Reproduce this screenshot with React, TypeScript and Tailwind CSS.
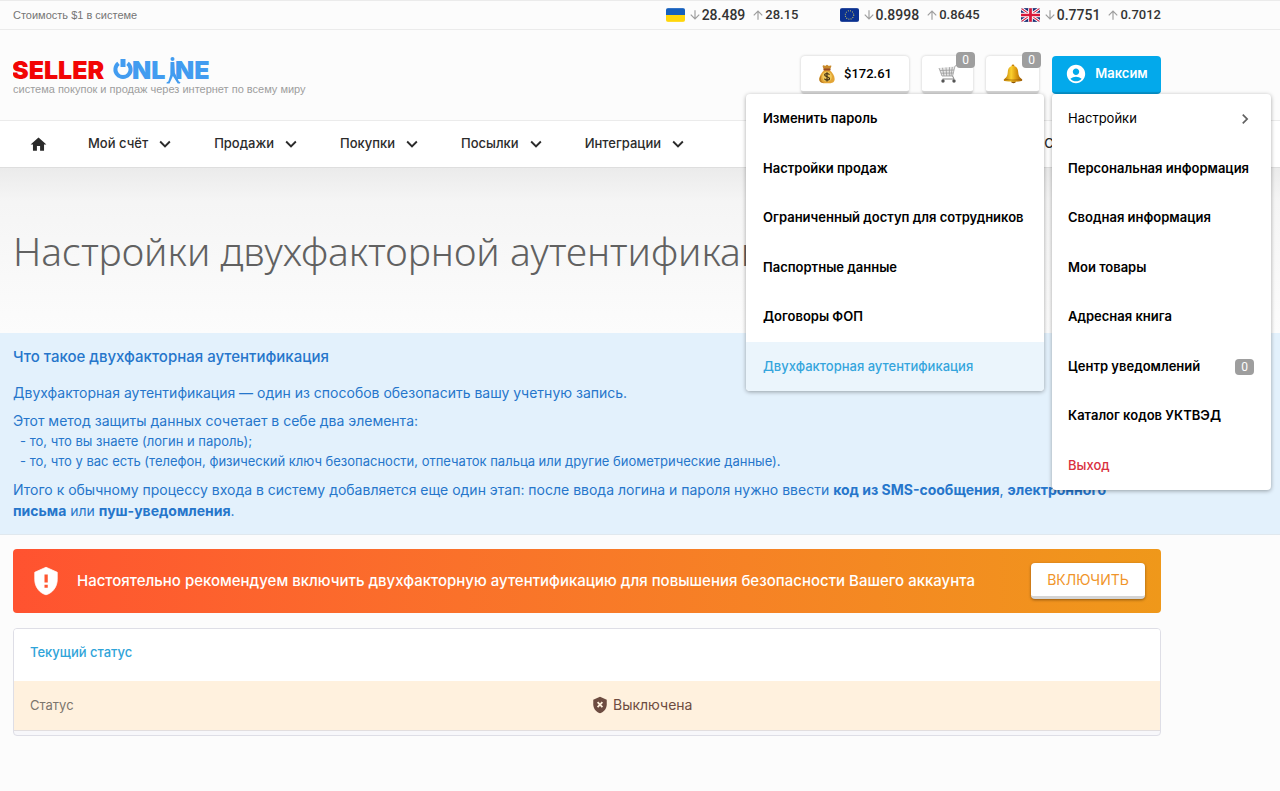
import React from "react";
import {
	MdAccountCircle,
	MdArrowDownward,
	MdArrowUpward,
	MdChevronRight,
	MdHome,
	MdKeyboardArrowDown,
} from "react-icons/md";

type Rate = { name: string; flag: React.ReactNode; down: string; up: string };

const UaFlag = () => (
	<svg viewBox="0 0 18 13" className="w-[19px] h-[14px] rounded-[2px]" aria-hidden="true">
		<rect width="18" height="7" fill="#1560bd" />
		<rect y="6.5" width="18" height="6.5" fill="#ffd60a" />
	</svg>
);

const EuFlag = () => (
	<svg viewBox="0 0 18 13" className="w-[19px] h-[14px] rounded-[2px]" aria-hidden="true">
		<rect width="18" height="13" fill="#0b3190" />
		<circle cx="9" cy="6.5" r="4" fill="none" stroke="#c9c35a" strokeWidth="1" strokeDasharray="0.9 1.2" />
	</svg>
);

const GbFlag = () => (
	<svg viewBox="0 0 18 13" className="w-[19px] h-[14px] rounded-[2px]" aria-hidden="true">
		<rect width="18" height="13" fill="#1b2f74" />
		<path d="M0 0l18 13M18 0L0 13" stroke="#fff" strokeWidth="2.8" />
		<path d="M0 0l18 13M18 0L0 13" stroke="#d8173a" strokeWidth="1" />
		<path d="M9 0v13M0 6.5h18" stroke="#fff" strokeWidth="4.4" />
		<path d="M9 0v13M0 6.5h18" stroke="#d8173a" strokeWidth="2.6" />
	</svg>
);

const MoneyBag = () => (
	<svg viewBox="0 0 20 22" className="w-[18px] h-5" aria-hidden="true">
		<path d="M6.5 6C5.5 3.500 4.600 2 5.500 1.500c1-.5 1.600.6 2.600.4C9 1.700 9.200.6 10 .6s1.100 1.100 2 1.300c1 .2 1.700-.9 2.600-.3.800.6-.2 2-1.200 4.400z" fill="#c98a2b" />
		<path d="M7 6.500C4 9 1.500 13 1.500 16.500c0 3.500 2 4.900 8.500 4.900s8.500-1.400 8.500-4.900C18.500 13 16 9 13 6.500z" fill="#e3a536" />
		<path d="M4 12.500c-1.500 4-.8 7.500 3 8.500-4.500-.3-5.500-2-5.500-4.500 0-1.400 1-3 2.500-4z" fill="#b87a20" />
		<rect x="6" y="5" width="8" height="2" rx="1" fill="#9b4a22" />
		<circle cx="10" cy="14" r="5.400" fill="#f0c95c" />
		<path d="M12.700 11.800c-.4-1-1.500-1.400-2.700-1.400-1.500 0-2.600.7-2.600 1.800 0 2.500 5.400 1.200 5.400 3.700 0 1.100-1.200 1.800-2.800 1.800-1.400 0-2.500-.6-2.800-1.600M10 9v10.200" fill="none" stroke="#3f2d10" strokeWidth="1.300" />
	</svg>
);

const Cart = () => (
	<svg viewBox="0 0 20 20" className="w-5 h-5" fill="none" aria-hidden="true">
		<path d="M1 4l15.500-1.500L14.600 12H4z" fill="#e6e6e6" />
		<path d="M1 4l3 8h10.600L17 2l2-.8M2 6.500l14-.5M3 9.200l12.400-.2M4.500 3.800L6 12M8 3.500l.7 8.500M11.500 3.200l-.2 8.800M14.300 3L13 12" stroke="#9a9a9a" strokeWidth=".8" />
		<path d="M14.600 12l1.400 3H4.500" stroke="#858585" strokeWidth="1" />
		<circle cx="5" cy="17" r="1.700" fill="#555" />
		<circle cx="16" cy="17" r="1.700" fill="#555" />
	</svg>
);

const Bell = () => (
	<svg viewBox="0 0 20 20" className="w-5 h-5" aria-hidden="true">
		<defs>
			<linearGradient id="bell" x1="0" x2="1">
				<stop offset="0" stopColor="#b87605" />
				<stop offset=".4" stopColor="#fbd02f" />
				<stop offset=".7" stopColor="#d8930c" />
				<stop offset="1" stopColor="#9a5a05" />
			</linearGradient>
		</defs>
		<ellipse cx="10.500" cy="17.600" rx="2.400" ry="1.700" fill="#8a5205" />
		<circle cx="10" cy="1.900" r="1.400" fill="#c98208" />
		<path d="M10 2C6.500 2 5 4.500 4.800 8c-.2 3.500-1 5.500-3.800 7.200-.5.600-.2 1.600.6 1.800 5 1 11.800 1 16.800 0 .8-.2 1.100-1.200.6-1.800C16.200 13.500 15.400 11.500 15.200 8 15 4.500 13.500 2 10 2z" fill="url(#bell)" />
		<path d="M2 15.200c5 1.200 11 1.200 16 0" fill="none" stroke="#a36406" strokeWidth=".8" />
	</svg>
);

const SHIELD = "M12 1L3 5v6c0 5.550 3.840 10.740 9 12 5.160-1.260 9-6.450 9-12V5z";

const ShieldAlert = () => (
	<svg viewBox="0 0 24 24" className="w-[30px] h-[30px] shrink-0" aria-hidden="true">
		<path d={SHIELD} fill="#fff" stroke="#fff" strokeLinejoin="round" strokeWidth=".6" />
		<path d="M10.800 6.800h2.600v6.400h-2.600zM10.800 15h2.600v2.400h-2.600z" fill="#ff5630" />
	</svg>
);

const ShieldOff = () => (
	<svg viewBox="0 0 24 24" className="w-[18px] h-[18px]" aria-hidden="true">
		<path d={SHIELD} fill="#6d4c41" />
		<path d="M8.800 8.300l6.400 6.400M15.200 8.300l-6.400 6.400" stroke="#fff1de" strokeWidth="2.400" />
	</svg>
);

const RATES: Rate[] = [
	{ name: "UAH", flag: <UaFlag />, down: "28.489", up: "28.15" },
	{ name: "EUR", flag: <EuFlag />, down: "0.8998", up: "0.8645" },
	{ name: "GBP", flag: <GbFlag />, down: "0.7751", up: "0.7012" },
];

const NAV_ITEMS = ["Мой счёт", "Продажи", "Покупки", "Посылки", "Интеграции"];

const SETTINGS_ITEMS = [
	"Изменить пароль",
	"Настройки продаж",
	"Ограниченный доступ для сотрудников",
	"Паспортные данные",
	"Договоры ФОП",
	"Двухфакторная аутентификация",
];

const USER_ITEMS: { label: string; count?: number }[] = [
	{ label: "Персональная информация" },
	{ label: "Сводная информация" },
	{ label: "Мои товары" },
	{ label: "Адресная книга" },
	{ label: "Центр уведомлений", count: 0 },
	{ label: "Каталог кодов УКТВЭД" },
];

const Container = ({ className = "", children }: { className?: string; children: React.ReactNode }) => (
	<div className={`w-full max-w-[1174px] px-[13px] ${className}`}>{children}</div>
);

const Count = ({ value }: { value: number }) => (
	<span className="inline-flex items-center justify-center w-[19px] h-4 rounded bg-[#9e9e9e] text-white text-xs font-normal font-[Roboto,sans-serif]">
		{value}
	</span>
);

const TopBar = () => (
	<div className="border-y border-[#ebebeb]">
		<Container className="flex items-center justify-between h-7">
			<span className="text-[11px] text-[#757575] font-['Liberation_Sans',sans-serif]">Стоимость $1 в системе</span>
			<div className="flex gap-[41px] font-[Roboto,sans-serif] font-medium text-[#333]">
				{RATES.map((rate) => (
					<div key={rate.name} className="flex items-center">
						{rate.flag}
						<MdArrowDownward size={14} className="ml-[3px] text-[#9e9e9e]" />
						<span className="text-sm leading-4">{rate.down}</span>
						<MdArrowUpward size={14} className="ml-1.5 text-[#9e9e9e]" />
						<span className="text-[13px] leading-4">{rate.up}</span>
					</div>
				))}
			</div>
		</Container>
	</div>
);

const Logo = () => (
	<a href="#" className="block pt-0.5">
		<svg viewBox="0 0 200 30" className="w-[200px] h-[30px] -mb-1" role="img" aria-label="Seller Online">
			<g fontFamily="Inter, sans-serif" fontWeight="900" fontSize="25">
				<text x="-1" y="22" fill="#f20505">SELLER</text>
				<text x="119" y="22" fill="#429cf0">NL</text>
				<text x="162" y="22" fill="#429cf0">NE</text>
			</g>
			<path d="M105.500 6.300a7.600 7.600 0 1 0 9 0" fill="none" stroke="#429cf0" strokeWidth="4" />
			<rect x="107.500" y="2" width="5" height="8" fill="#429cf0" />
			<circle cx="159.500" cy="2" r="2" fill="#429cf0" />
			<path d="M157.500 5h3.800l.6 11 4 8.500 1.600.7-.6 1.300h-2.200l-4.800-7.500-3.400 7.500h-3l.2-1.300 1.600-.6 2-6.600z" fill="#429cf0" />
		</svg>
		<span className="block text-[11px] leading-3 text-[#9e9e9e] font-['Liberation_Sans',sans-serif]">
			система покупок и продаж через интернет по всему миру
		</span>
	</a>
);

const menuPanel = "absolute rounded bg-white shadow-[0_1px_4px_rgba(0,0,0,0.35)]";

const UserMenu = () => (
	<ul className={`${menuPanel} z-20 top-full left-0 w-[219px] text-[13px] font-semibold text-black`}>
		<li className="relative h-[50px]">
			<a href="#" className="flex items-center justify-between h-full pl-4 pr-4 font-normal">
				Настройки
				<MdChevronRight size={20} className="text-[#616161]" />
			</a>
			<ul className={`${menuPanel} top-0 right-full mr-2 w-[298px] overflow-hidden`}>
				{SETTINGS_ITEMS.map((label, i) => {
					const active = i === SETTINGS_ITEMS.length - 1;
					return (
						<li key={label} className="odd:h-[50px] even:h-[49px]">
							<a
								href="#"
								className={`flex items-center h-full px-[17px] whitespace-nowrap ${
									active ? "bg-[#ebf5fc] text-[#35a5dd] font-medium" : "hover:bg-gray-50"
								}`}
							>
								{label}
							</a>
						</li>
					);
				})}
			</ul>
		</li>
		{USER_ITEMS.map((item) => (
			<li key={item.label} className="odd:h-[50px] even:h-[49px]">
				<a href="#" className="flex items-center justify-between h-full pl-4 pr-[17px] whitespace-nowrap hover:bg-gray-50">
					{item.label}
					{item.count !== undefined && <Count value={item.count} />}
				</a>
			</li>
		))}
		<li className="h-[49px]">
			<a href="#" className="flex items-center h-full px-4 font-medium text-[#d93040]">Выход</a>
		</li>
	</ul>
);

const headerButton =
	"flex items-center justify-center h-[38px] rounded bg-white border-b-3 border-[#d4d4d4] shadow-[0_0_3px_rgba(0,0,0,0.2)]";

const Header = () => (
	<header>
		<Container className="flex items-center justify-between h-[90px]">
			<Logo />
			<div className="flex gap-[13px]">
				<button className={`${headerButton} w-[108px] gap-2 text-[13px] font-medium font-[Roboto,sans-serif]`}>
					<MoneyBag />
					$172.61
				</button>
				<button className={`${headerButton} relative w-[51px]`} aria-label="Корзина">
					<Cart />
					<span className="absolute -top-1 -right-0.5 flex"><Count value={0} /></span>
				</button>
				<button className={`${headerButton} relative w-[53px]`} aria-label="Уведомления">
					<Bell />
					<span className="absolute -top-1 -right-0.5 flex"><Count value={0} /></span>
				</button>
				<div className="relative">
					<button className="flex items-center justify-center gap-2 w-[109px] h-[38px] rounded bg-[#03a9eb] border-b-2 border-[#0596d0] text-white text-[13px] font-semibold">
						<MdAccountCircle size={22} />
						Максим
					</button>
					<UserMenu />
				</div>
			</div>
		</Container>
	</header>
);

const NavBar = () => (
	<nav className="bg-white border-t border-b border-t-[#ebebeb] border-b-[#dedede] text-[13px] font-medium text-[#2b2b2b]">
		<Container className="flex items-center h-[46px]">
			<a href="#" aria-label="Главная" className="pl-4 pr-10">
				<MdHome size={19} />
			</a>
			{NAV_ITEMS.map((label) => (
				<button key={label} className="flex items-center gap-1.5 mr-[38px]">
					{label}
					<MdKeyboardArrowDown size={22} />
				</button>
			))}
			<button className="flex items-center gap-1.5 ml-auto mr-[34px]">
				Справка
				<MdKeyboardArrowDown size={22} />
			</button>
		</Container>
	</nav>
);

const App = () => (
	<div className="min-h-screen bg-[#fcfcfc] overflow-x-hidden font-[Inter,'Liberation_Sans',sans-serif]">
		<TopBar />
		<Header />
		<NavBar />
		<section className="bg-linear-to-b from-[#ebebeb] from-0% via-[#f5f5f5] via-20% to-[#fcfcfc]">
			<Container className="flex items-center h-[165px]">
				<h1 className="text-[39px] leading-[48px] font-light text-[#616161] whitespace-nowrap font-['Noto_Sans',sans-serif]">
					Настройки двухфакторной аутентификации
				</h1>
			</Container>
		</section>
		<section className="bg-[#e3f1fc] border-b border-[#e0e8ee] text-[#2676cb] text-sm leading-5">
			<Container className="flex flex-col gap-2 pt-[14px] pb-[13px]">
				<h2 className="mb-2 text-[15px] font-medium">Что такое двухфакторная аутентификация</h2>
				<p>Двухфакторная аутентификация — один из способов обезопасить вашу учетную запись.</p>
				<div>
					<p>Этот метод защиты данных сочетает в себе два элемента:</p>
					<ul className="pl-[7px] text-[13px]">
						<li>- то, что вы знаете (логин и пароль);</li>
						<li>- то, что у вас есть (телефон, физический ключ безопасности, отпечаток пальца или другие биометрические данные).</li>
					</ul>
				</div>
				<p className="leading-[21px]">
					Итого к обычному процессу входа в систему добавляется еще один этап: после ввода логина и пароля нужно ввести{" "}
					<b>код из SMS-сообщения</b>, <b>электронного</b> <b>письма</b> или <b>пуш-уведомления</b>.
				</p>
			</Container>
		</section>
		<main>
			<Container className="flex flex-col gap-[15px] pt-[14px]">
				<div className="flex items-center h-16 pl-[18px] pr-4 rounded bg-linear-to-r from-[#ff5230] to-[#ef981a] text-white">
					<ShieldAlert />
					<p className="ml-4 text-[15px] font-medium">
						Настоятельно рекомендуем включить двухфакторную аутентификацию для повышения безопасности Вашего аккаунта
					</p>
					<button className="ml-auto w-[114px] h-9 shrink-0 rounded bg-white border-b-3 border-[#d4d4d4] shadow-[0_1px_3px_rgba(0,0,0,0.4)] text-sm text-[#f0952a]">
						ВКЛЮЧИТЬ
					</button>
				</div>
				<div className="rounded border border-[#dedee6] bg-[#f7f7fa] pb-1 overflow-hidden">
					<table className="w-full table-fixed text-[13px] text-left">
						<caption className="pl-4 pt-[13px] pb-[19px] bg-white text-left leading-5 font-medium text-[#2fa4d9]">
							Текущий статус
						</caption>
						<tbody>
							<tr className="h-[49px] bg-[#fff1de] border-b border-[#e2dedf]">
								<th scope="row" className="w-1/2 pl-4 font-normal text-[#7b756d]">Статус</th>
								<td className="pl-1 text-sm text-[#6d4c41]">
									<span className="flex items-center gap-1">
										<ShieldOff />
										Выключена
									</span>
								</td>
							</tr>
						</tbody>
					</table>
				</div>
			</Container>
		</main>
	</div>
);

export default App;
